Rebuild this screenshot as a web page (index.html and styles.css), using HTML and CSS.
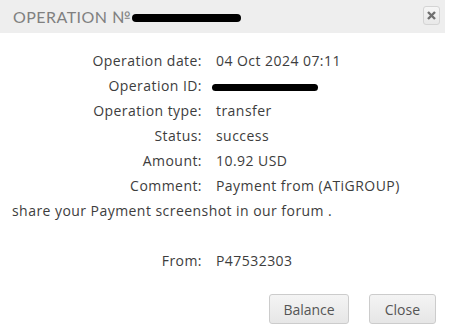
FILE: index.html
```html
<!DOCTYPE html>
<html lang="en">
<head>
<meta charset="utf-8">
<title>Operation</title>
<link rel="stylesheet" href="styles.css">
</head>
<body>
<div class="dialog">
  <div class="titlebar">
    <span class="title">OPERATION №<span class="blot blot-title"></span></span>
    <span class="close-x">
      <svg width="9" height="9" viewBox="0 0 9 9"><path d="M1 1L8 8M8 1L1 8" stroke="#6f6f6f" stroke-width="2.4"/></svg>
    </span>
  </div>

  <div class="details">
    <div class="row"><span class="label">Operation date:</span><span class="value">04 Oct 2024 07:11</span></div>
    <div class="row"><span class="label">Operation ID:</span><span class="value"><span class="blot blot-id"></span></span></div>
    <div class="row"><span class="label">Operation type:</span><span class="value">transfer</span></div>
    <div class="row"><span class="label">Status:</span><span class="value">success</span></div>
    <div class="row"><span class="label">Amount:</span><span class="value">10.92 USD</span></div>
    <div class="row"><span class="label">Comment:</span><span class="value">Payment from (ATiGROUP)</span></div>
    <div class="note">share your Payment screenshot in our forum .</div>
    <div class="row spacer"></div>
    <div class="row"><span class="label">From:</span><span class="value">P47532303</span></div>
  </div>

  <div class="buttons">
    <button class="btn btn-balance">Balance</button>
    <button class="btn">Close</button>
  </div>
</div>
</body>
</html>
```

FILE: styles.css
```css
html, body {
  margin: 0;
  padding: 0;
  background: #ffffff;
}

body {
  font-family: "Open Sans", sans-serif;
  font-size: 14px;
  letter-spacing: 0.45px;
  color: #3d3d3d;
}

.dialog {
  width: 457px;
}

.titlebar {
  height: 33px;
  margin-right: 12px;
  background: #eeeeee;
  display: flex;
  align-items: center;
  justify-content: space-between;
  padding: 0 5px 0 13px;
}

.title {
  font-family: "Lato", sans-serif;
  font-size: 16px;
  letter-spacing: 0.45px;
  color: #808080;
  display: flex;
  align-items: center;
}

.blot {
  display: inline-block;
  background: #000000;
  border-radius: 4px;
}

.blot-title {
  width: 109px;
  height: 8px;
  margin-left: 1px;
  margin-top: 2px;
}

.blot-id {
  width: 106px;
  height: 7px;
  margin-left: -4px;
  vertical-align: middle;
}

.close-x {
  width: 15px;
  height: 17px;
  border: 1px solid #d4d4d4;
  border-radius: 3px;
  background: linear-gradient(#f6f6f6, #e8e8e8);
  display: flex;
  align-items: center;
  justify-content: center;
  margin-top: -2px;
}

.details {
  padding-top: 15px;
}

.row {
  display: grid;
  grid-template-columns: 202px auto;
  column-gap: 14px;
  height: 25px;
  line-height: 25px;
}

.label {
  text-align: right;
}

.note {
  height: 25px;
  line-height: 25px;
  padding-left: 12px;
}

.buttons {
  display: flex;
  justify-content: flex-end;
  gap: 20px;
  padding: 21px 21px 0 0;
}

.btn {
  font-family: "Open Sans", sans-serif;
  font-size: 14px;
  color: #555555;
  height: 30px;
  padding: 0 15px;
  border: 1px solid #cccccc;
  border-radius: 3px;
  background: linear-gradient(#f4f4f4, #e6e6e6);
}

.btn-balance {
  padding: 0 13px;
}
```
